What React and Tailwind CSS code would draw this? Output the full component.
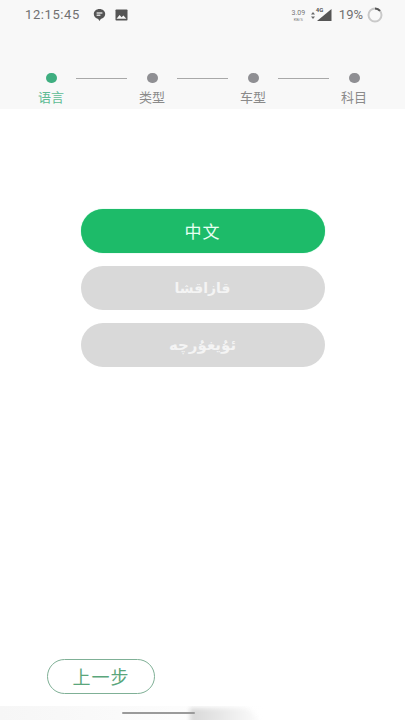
import React from 'react';

const steps = ['语言', '类型', '车型', '科目'];
const languages = [
  { label: '中文', className: "bg-[#1dbb69] text-[17px] tracking-[1px] text-[#e8fff3] shadow-[0_0_1px_#5fe0a0]" },
  { label: 'قازاقشا', className: "bg-[#d9d9d9] font-['DejaVu_Sans',sans-serif] text-[14px] font-bold text-[#f4f4f4]" },
  { label: 'ئۇيغۇرچە', className: "bg-[#d9d9d9] font-['DejaVu_Sans',sans-serif] text-[15px] font-bold text-[#f4f4f4]" },
];

const StatusBar = () => (
  <div className="flex h-[30px] items-center justify-between pl-[25px] pr-[22px] text-[#707070]">
    <div className="flex items-center">
      <span className="w-[55px] font-['Roboto',sans-serif] text-[13px] tracking-[0.6px] whitespace-nowrap">12:15:45</span>
      <svg className="ml-[13px] h-[14px] w-[13px]" viewBox="0 0 13 14">
        <path d="M6.5 1C9.8 1 12.2 3.2 12.2 6.1c0 2.6-1.9 4.5-4.4 5L6.5 13l-1.3-1.9C2.7 10.6.8 8.7.8 6.1.8 3.2 3.2 1 6.5 1z" fill="#555555" />
        <rect x="3.6" y="4.4" width="5.8" height="1.2" fill="#f8f8f8" />
        <rect x="3.6" y="6.6" width="3.8" height="1.2" fill="#f8f8f8" />
      </svg>
      <svg className="ml-[9px] h-[12px] w-[13px]" viewBox="0 0 13 12">
        <rect x="0.5" y="0.5" width="12" height="11" rx="0.8" fill="#555555" />
        <path d="M1.5 9.8 4.6 6l2 2.2 1.8-1.7 3 3.3z" fill="#f8f8f8" />
      </svg>
    </div>
    <div className="flex items-center">
      <div className="flex w-[17px] flex-col items-center font-['Roboto',sans-serif] text-[#777777]">
        <span className="text-[7px] leading-[8px] whitespace-nowrap">3.09</span>
        <span className="text-[4px] leading-[5px] whitespace-nowrap">KB/S</span>
      </div>
      <svg className="ml-[4px] h-[7px] w-[4px]" viewBox="0 0 4 7">
        <path d="M2 0 4 2.6H0zM2 7 0 4.4h4z" fill="#666666" />
      </svg>
      <div className="relative ml-[1px] h-[14px] w-[16px]">
        <svg className="h-[14px] w-[16px]" viewBox="0 0 16 14">
          <path d="M15.5 1v12H1z" fill="#555555" />
        </svg>
        <span className="absolute -top-[2px] left-[0px] bg-[#f8f8f8] font-['Roboto',sans-serif] text-[6px] leading-[7px] font-bold text-[#555555]">4G</span>
      </div>
      <span className="ml-[7px] font-['Roboto',sans-serif] text-[13px] whitespace-nowrap">19%</span>
      <svg className="ml-[4px] h-[16px] w-[16px]" viewBox="0 0 16 16" fill="none">
        <circle cx="8" cy="8" r="6.5" stroke="#c9c9c9" strokeWidth="2" />
        <path d="M8 1.5A6.5 6.5 0 0 1 13 3.9" stroke="#555555" strokeWidth="2" />
      </svg>
    </div>
  </div>
);

const Stepper = () => (
  <div className="mt-[43px] flex items-start px-[26px]">
    {steps.map((step, idx) => (
      <React.Fragment key={step}>
        {idx > 0 && <div className="mt-[5px] h-px w-[51px] bg-[#a8a8a8]" />}
        <div className="flex w-[50px] flex-col items-center">
          <div className={`h-[10px] w-[11px] rounded-full ${idx === 0 ? 'bg-[#3fae80]' : 'bg-[#8f8f93]'}`} />
          <span className={`mt-[5px] text-[13px] leading-[18px] whitespace-nowrap ${idx === 0 ? 'text-[#5dbb94]' : 'text-[#8a8a8a]'}`}>
            {step}
          </span>
        </div>
      </React.Fragment>
    ))}
  </div>
);

export default function App() {
  return (
    <div className="flex h-[720px] w-[405px] flex-col overflow-hidden bg-white font-['Noto_Sans_CJK_SC','DejaVu_Sans',sans-serif]">
      <div className="h-[109px] shrink-0 bg-[#f8f8f8]">
        <StatusBar />
        <Stepper />
      </div>

      <div className="flex flex-1 flex-col items-center gap-[13px] pt-[100px]">
        {languages.map((lang) => (
          <button key={lang.label} className={`h-[44px] w-[244px] rounded-full ${lang.className}`}>
            {lang.label}
          </button>
        ))}
      </div>

      <div className="pl-[47px]">
        <button className="h-[35px] w-[108px] rounded-full border border-[#7fb096] text-[18px] tracking-[1px] text-[#5aa67b]">上一步</button>
      </div>

      <div className="relative mt-[12px] h-[14px] shrink-0 overflow-hidden bg-gradient-to-r from-[#f6f6f6] to-white to-[65%]">
        <div className="absolute left-[190px] top-[2px] h-[16px] w-[68px] rounded-tr-[40px] bg-gradient-to-r from-[#d8d8d8] to-[#fbfbfb] blur-[2px]" />
        <div className="absolute left-[122px] top-[6px] h-[2px] w-[73px] rounded-full bg-[#9a9a9a]" />
      </div>
    </div>
  );
}
